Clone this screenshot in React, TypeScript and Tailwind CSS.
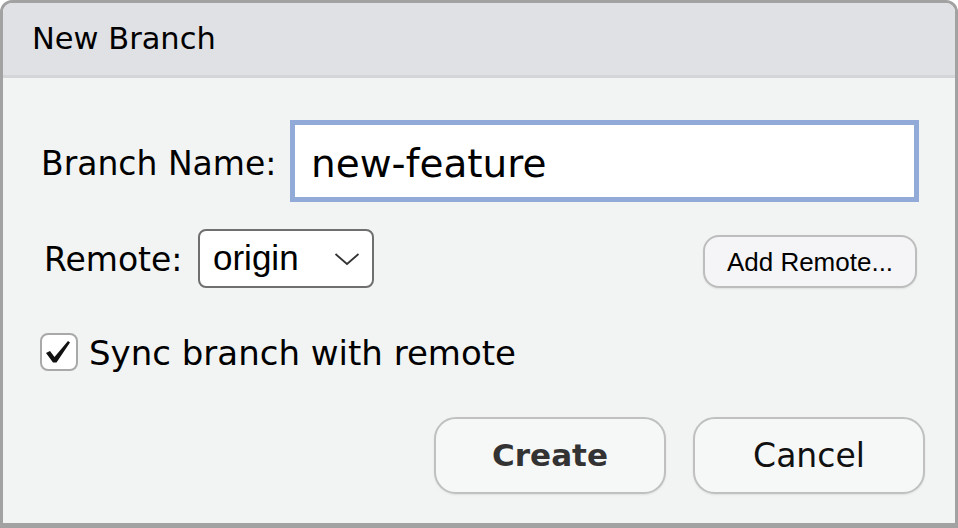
import React from "react";

export default function App() {
  return (
    <div className="w-[958px] h-[528px] overflow-hidden bg-white">
      <div className="w-[958px] h-[528px] box-border border-[3px] border-b-[5px] border-[#a2a2a2] rounded-t-[12px] flex flex-col overflow-hidden font-['DejaVu_Sans',sans-serif] text-black">
        {/* Title bar */}
        <div className="h-[75px] shrink-0 bg-[#e0e1e5] border-b-[3px] border-[#d4d5d8] flex items-center pl-[29px]">
          <span className="text-[30.5px] leading-none pt-[1px]">New Branch</span>
        </div>

        {/* Body */}
        <div className="flex-1 bg-[#f2f3f3] flex flex-col">
          {/* Branch name row */}
          <div className="mt-[42px] h-[82px] flex items-center pl-[38px]">
            <span className="w-[249px] shrink-0 text-[33px] leading-none pt-[4px]">Branch Name:</span>
            <div className="w-[629px] h-[82px] box-border border-[5px] border-[#92aad7] bg-white flex items-center pl-[16px]">
              <span className="text-[39px] leading-none pt-[4px]">new-feature</span>
            </div>
          </div>

          {/* Remote row */}
          <div className="mt-[26px] h-[60px] flex items-center pl-[41px] pr-[38px]">
            <span className="w-[154px] shrink-0 text-[33px] leading-none pt-[2px]">Remote:</span>
            <div className="w-[176px] h-[59px] box-border border-2 border-[#6f6f6f] rounded-[8px] bg-white flex items-center justify-between pl-[13px] pr-[12px]">
              <span className="font-['Liberation_Sans',Arial,sans-serif] text-[35px] leading-none pb-[2px]">origin</span>
              <svg width="26" height="14" viewBox="0 0 26 14" className="mt-[2px]">
                <path d="M1.5 2 L13 12 L24.5 2" fill="none" stroke="#333" strokeWidth="1.8" />
              </svg>
            </div>
            <div className="ml-auto self-end w-[214px] h-[53px] box-border border-2 border-[#bdbdbd] rounded-[16px] bg-[#f5f5f7] shadow-[0_1px_2px_rgba(0,0,0,0.08)] flex items-center justify-center">
              <span className="font-['Liberation_Sans',Arial,sans-serif] text-[26px] leading-none">Add Remote...</span>
            </div>
          </div>

          {/* Sync checkbox row */}
          <div className="mt-[45px] h-[38px] flex items-center pl-[37px]">
            <div className="w-[38px] h-[38px] box-border border-2 border-[#a9a9a9] rounded-[8px] bg-white flex items-end justify-center shrink-0">
              <svg width="26" height="24" viewBox="0 0 26 24" className="mb-[5px] mr-[2px]">
                <path d="M1 13 L5 11 L9.5 17 L23 1 L25 2.5 L11.5 22.5 L8 22.5 Z" fill="#111" />
              </svg>
            </div>
            <span className="ml-[11px] text-[34px] leading-none pt-[2px]">Sync branch with remote</span>
          </div>

          {/* Buttons */}
          <div className="mt-[46px] flex justify-end gap-[27px] pr-[30px]">
            <div className="w-[232px] h-[77px] box-border border-2 border-[#c0c0c0] rounded-[22px] bg-[#f6f7f7] shadow-[0_1px_2px_rgba(0,0,0,0.08)] flex items-center justify-center">
              <span className="font-bold text-[31px] leading-none text-[#333]">Create</span>
            </div>
            <div className="w-[232px] h-[77px] box-border border-2 border-[#c0c0c0] rounded-[22px] bg-[#f6f7f7] shadow-[0_1px_2px_rgba(0,0,0,0.08)] flex items-center justify-center">
              <span className="text-[33px] leading-none text-[#111]">Cancel</span>
            </div>
          </div>
        </div>
      </div>
    </div>
  );
}
